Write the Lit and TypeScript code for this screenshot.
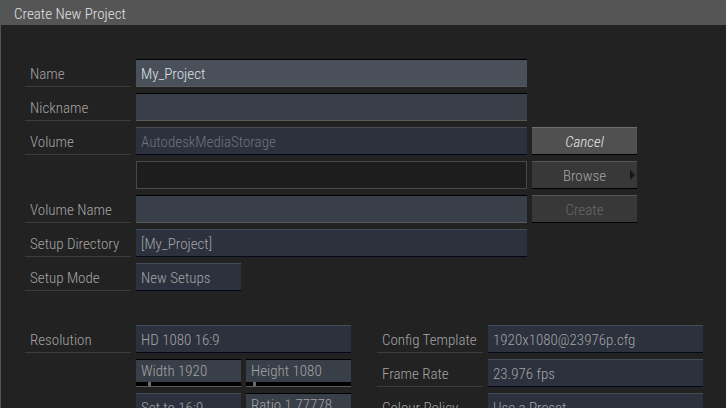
import { LitElement, html, css } from "lit";
import { customElement, property } from "lit/decorators.js";

const base = css`
  * {
    box-sizing: border-box;
  }
  input,
  select,
  button,
  label {
    font: inherit;
    color: inherit;
    margin: 0;
    border-radius: 0;
    outline: none;
  }
`;

/** A numeric field with its slider drawn along the lower edge. */
@customElement("slider-field")
export class SliderField extends LitElement {
  @property() label = "";
  @property() text = "";
  @property({ type: Number }) value = 0;
  @property({ type: Number }) max = 16384;

  static styles = [
    base,
    css`
      :host {
        display: block;
        min-width: 0;
      }
      .box {
        display: flex;
        flex-direction: column;
        height: 28px;
        background: #393f49;
        border-top: 1px solid #000;
        border-bottom: 1px solid #5a5a5a;
      }
      .caption {
        flex: 1;
        padding: 0 5px;
        line-height: 22px;
        white-space: nowrap;
      }
      .range {
        appearance: none;
        display: block;
        width: 100%;
        height: 4px;
        background: #000;
      }
      .range::-webkit-slider-thumb {
        appearance: none;
        width: 3px;
        height: 4px;
        background: #6c6c6c;
      }
    `,
  ];

  render() {
    return html`
      <div class="box">
        <label class="caption" for="range">${this.label} ${this.text}</label>
        <input
          id="range"
          class="range"
          type="range"
          min="0"
          step="any"
          .max=${String(this.max)}
          .value=${String(this.value)}
        />
      </div>
    `;
  }
}

@customElement("app-root")
export class AppRoot extends LitElement {
  static styles = [
    base,
    css`
      :host {
        display: block;
        height: 100vh;
        overflow: hidden;
        box-sizing: border-box;
        background: #222;
        border-top: 1px solid #4c555a;
        border-left: 1px solid #4c555a;
        color: #a4a4a4;
        font: 300 15px/20px "Roboto Condensed", Roboto, sans-serif;
      }
      .title {
        margin: 0;
        padding: 3px 13px 1px;
        background: #555;
        color: #e2e2e2;
        font: inherit;
      }
      .body {
        display: flex;
        flex-direction: column;
        gap: 34px;
        padding: 34px 23px 0 24px;
      }
      .project {
        display: grid;
        grid-template-columns: 106px minmax(0, 1fr) 105px;
        gap: 6px 5px;
        padding-right: 66px;
      }
      .settings {
        display: grid;
        grid-template-columns: minmax(0, 1fr) minmax(0, 1fr);
        column-gap: 26px;
      }
      .column {
        display: grid;
        grid-template-columns: 106px minmax(0, 1fr);
        gap: 6px 5px;
        align-content: start;
      }
      .pair {
        display: grid;
        grid-template-columns: 1fr 1fr;
        gap: 6px 5px;
        grid-column: 2;
      }
      .label {
        grid-column: 1;
        height: 28px;
        padding: 5px 5px 2px;
        border-bottom: 1px solid #3c3c3c;
        white-space: nowrap;
      }
      .field,
      .menu {
        appearance: none;
        display: block;
        width: 100%;
        height: 28px;
        padding: 2px 5px 0;
        border: 0;
        opacity: 1;
      }
      .field {
        padding-top: 1px;
        background: #393f49;
        border-top: 1px solid #000;
        border-bottom: 1px solid #5a5a5a;
      }
      .active {
        background: #4a505a;
        color: #dfe1e5;
      }
      .menu {
        background: #2b313d;
        border-top: 1px solid #444c55;
        border-bottom: 1px solid #04061a;
      }
      .dim {
        color: #70747a;
      }
      .path {
        grid-column: 2;
        background: #1d1d1d;
        border: 1px solid #484848;
      }
      .short {
        width: 105px;
      }
      .button {
        grid-column: 3;
        display: grid;
        grid-template-columns: 7px 1fr 7px;
        align-items: center;
        height: 28px;
        padding: 1px 0 0;
        background: #383838;
        border: 0;
        border-top: 1px solid #565656;
        border-bottom: 1px solid #000;
        text-align: center;
      }
      .button span {
        grid-column: 2;
      }
      .cancel {
        background: #505050;
        border-top-color: #6e6e6e;
        color: #e8e8e8;
        font-style: italic;
      }
      .off {
        color: #686868;
      }
      .arrow {
        display: block;
        width: 5px;
        height: 10px;
        margin-bottom: 2px;
        fill: #161616;
      }
    `,
  ];

  private menu(id: string, value: string, extra = "", disabled = false) {
    return html`<select id=${id} class="menu ${extra}" ?disabled=${disabled}>
      <option>${value}</option>
    </select>`;
  }

  render() {
    return html`
      <h1 class="title">Create New Project</h1>
      <form class="body" @submit=${(e: Event) => e.preventDefault()}>
        <div class="project">
          <label class="label" for="name">Name</label>
          <input id="name" class="field active" type="text" value="My_Project" />

          <label class="label" for="nickname">Nickname</label>
          <input id="nickname" class="field" type="text" />

          <label class="label" for="volume">Volume</label>
          ${this.menu("volume", "AutodeskMediaStorage", "dim", true)}
          <button class="button cancel" type="button"><span>Cancel</span></button>

          <input class="field path" type="text" aria-label="Volume path" readonly />
          <button class="button" type="button">
            <span>Browse</span>
            <svg class="arrow" viewBox="0 0 5 10" aria-hidden="true"><path d="M0 0L5 5L0 10Z" /></svg>
          </button>

          <label class="label" for="volume-name">Volume Name</label>
          <input id="volume-name" class="field" type="text" />
          <button class="button off" type="button" disabled><span>Create</span></button>

          <label class="label" for="directory">Setup Directory</label>
          ${this.menu("directory", "[My_Project]")}

          <label class="label" for="mode">Setup Mode</label>
          ${this.menu("mode", "New Setups", "short")}
        </div>

        <div class="settings">
          <div class="column">
            <label class="label" for="resolution">Resolution</label>
            ${this.menu("resolution", "HD 1080 16:9")}
            <div class="pair">
              <slider-field label="Width" text="1920" value="1920"></slider-field>
              <slider-field label="Height" text="1080" value="1080"></slider-field>
              ${this.menu("aspect", "Set to 16:9")}
              <slider-field label="Ratio" text="1.77778" value="1.77778" max="100"></slider-field>
            </div>
          </div>
          <div class="column">
            <label class="label" for="template">Config Template</label>
            ${this.menu("template", "1920x1080@23976p.cfg")}
            <label class="label" for="rate">Frame Rate</label>
            ${this.menu("rate", "23.976 fps")}
            <label class="label" for="policy">Colour Policy</label>
            ${this.menu("policy", "Use a Preset")}
          </div>
        </div>
      </form>
    `;
  }
}
